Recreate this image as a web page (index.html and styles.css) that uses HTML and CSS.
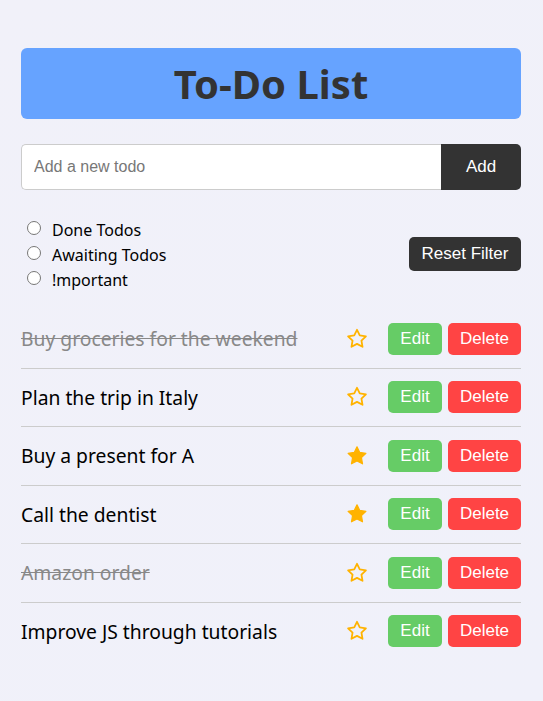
FILE: index.html
```html
<!DOCTYPE html>
<html lang="en">
<head>
<meta charset="utf-8">
<title>To-Do List</title>
<link rel="stylesheet" href="styles.css">
</head>
<body>
<main class="container">
  <h1 class="title">To-Do List</h1>
  <form class="add-row">
    <input class="add-input" type="text" placeholder="Add a new todo">
    <button class="add-btn" type="button">Add</button>
  </form>
  <div class="filters">
    <div class="radio-list">
      <label class="radio-row"><input type="radio" name="f" class="radio"><span>Done Todos</span></label>
      <label class="radio-row"><input type="radio" name="f" class="radio"><span>Awaiting Todos</span></label>
      <label class="radio-row"><input type="radio" name="f" class="radio"><span>!mportant</span></label>
    </div>
    <button class="reset-btn" type="button">Reset Filter</button>
  </div>
  <ul class="todo-list">
    <li class="todo">
      <span class="todo-text done">Buy groceries for the weekend</span>
      <svg class="star" viewBox="0 0 24 24"><path class="star-outline" d="M12 2.8l2.75 5.6 6.15.9-4.45 4.35 1.05 6.15L12 16.9l-5.5 2.9 1.05-6.15L3.1 9.3l6.15-.9z"/></svg>
      <button class="btn edit" type="button">Edit</button>
      <button class="btn delete" type="button">Delete</button>
    </li>
    <li class="todo">
      <span class="todo-text">Plan the trip in Italy</span>
      <svg class="star" viewBox="0 0 24 24"><path class="star-outline" d="M12 2.8l2.75 5.6 6.15.9-4.45 4.35 1.05 6.15L12 16.9l-5.5 2.9 1.05-6.15L3.1 9.3l6.15-.9z"/></svg>
      <button class="btn edit" type="button">Edit</button>
      <button class="btn delete" type="button">Delete</button>
    </li>
    <li class="todo">
      <span class="todo-text">Buy a present for A</span>
      <svg class="star" viewBox="0 0 24 24"><path class="star-fill" d="M12 2.8l2.75 5.6 6.15.9-4.45 4.35 1.05 6.15L12 16.9l-5.5 2.9 1.05-6.15L3.1 9.3l6.15-.9z"/></svg>
      <button class="btn edit" type="button">Edit</button>
      <button class="btn delete" type="button">Delete</button>
    </li>
    <li class="todo">
      <span class="todo-text">Call the dentist</span>
      <svg class="star" viewBox="0 0 24 24"><path class="star-fill" d="M12 2.8l2.75 5.6 6.15.9-4.45 4.35 1.05 6.15L12 16.9l-5.5 2.9 1.05-6.15L3.1 9.3l6.15-.9z"/></svg>
      <button class="btn edit" type="button">Edit</button>
      <button class="btn delete" type="button">Delete</button>
    </li>
    <li class="todo">
      <span class="todo-text done">Amazon order</span>
      <svg class="star" viewBox="0 0 24 24"><path class="star-outline" d="M12 2.8l2.75 5.6 6.15.9-4.45 4.35 1.05 6.15L12 16.9l-5.5 2.9 1.05-6.15L3.1 9.3l6.15-.9z"/></svg>
      <button class="btn edit" type="button">Edit</button>
      <button class="btn delete" type="button">Delete</button>
    </li>
    <li class="todo">
      <span class="todo-text">Improve JS through tutorials</span>
      <svg class="star" viewBox="0 0 24 24"><path class="star-outline" d="M12 2.8l2.75 5.6 6.15.9-4.45 4.35 1.05 6.15L12 16.9l-5.5 2.9 1.05-6.15L3.1 9.3l6.15-.9z"/></svg>
      <button class="btn edit" type="button">Edit</button>
      <button class="btn delete" type="button">Delete</button>
    </li>
  </ul>
</main>
</body>
</html>
```
FILE: styles.css
```css
html, body {
  margin: 0;
  padding: 0;
}
body {
  min-height: 701px;
  background: linear-gradient(135deg, #f1f1f9 0%, #f0f1fa 100%);
  font-family: "Noto Sans", "Open Sans", sans-serif;
  color: #000;
}
.container {
  width: 500px;
  margin: 0 0 0 21px;
  padding-top: 48px;
}
.title {
  margin: 0 0 25px;
  height: 71px;
  display: flex;
  align-items: center;
  justify-content: center;
  background: #66a3ff;
  border-radius: 6px;
  color: #333;
  font-size: 40px;
  font-weight: 700;
}
.add-row {
  display: flex;
  height: 46px;
  margin: 0;
}
.add-input {
  flex: 1;
  min-width: 0;
  box-sizing: border-box;
  height: 46px;
  margin: 0;
  padding: 0 12px;
  border: 1px solid #ccc;
  border-right: none;
  border-radius: 5px 0 0 5px;
  background: #fff;
  font-family: "Liberation Sans", Arial, sans-serif;
  font-size: 16px;
  outline: none;
}
.add-input::placeholder {
  color: #777;
}
.add-btn {
  width: 80px;
  height: 46px;
  margin: 0;
  border: none;
  border-radius: 0 5px 5px 0;
  background: #333;
  color: #fff;
  font-family: "Liberation Sans", Arial, sans-serif;
  font-size: 17px;
}
.filters {
  display: flex;
  align-items: center;
  justify-content: space-between;
  margin-top: 26px;
}
.radio-list {
  display: flex;
  flex-direction: column;
}
.radio-row {
  box-sizing: border-box;
  display: flex;
  align-items: center;
  height: 25px;
  font-size: 16px;
  padding-top: 2px;
}
.radio {
  width: 14px;
  height: 14px;
  margin: 0 11px 4px 6px;
}
.reset-btn {
  width: 112px;
  height: 34px;
  margin-top: 0;
  border: none;
  border-radius: 5px;
  background: #333;
  color: #fff;
  font-family: "Liberation Sans", Arial, sans-serif;
  font-size: 17px;
}
.todo-list {
  list-style: none;
  margin: 19px 0 0;
  padding: 0;
}
.todo {
  display: flex;
  align-items: center;
  padding: 12.75px 0;
  border-bottom: 1px solid #ccc;
}
.todo:last-child {
  border-bottom: none;
}
.todo-text {
  flex: 1;
  font-size: 19.3px;
}
.todo-text.done {
  color: #888;
  text-decoration: line-through;
}
.star {
  width: 24px;
  height: 24px;
  margin-right: 19px;
}
.star-outline {
  fill: none;
  stroke: #ffb300;
  stroke-width: 1.8;
  stroke-linejoin: round;
}
.star-fill {
  fill: #ffb300;
  stroke: #ffb300;
  stroke-width: 1.2;
  stroke-linejoin: round;
}
.btn {
  height: 32px;
  border: none;
  border-radius: 5px;
  color: #fff;
  font-family: "Liberation Sans", Arial, sans-serif;
  font-size: 17px;
  padding: 0;
}
.edit {
  width: 54px;
  background: #66cc66;
  margin-right: 6px;
}
.delete {
  width: 73px;
  background: #ff4444;
}
```
